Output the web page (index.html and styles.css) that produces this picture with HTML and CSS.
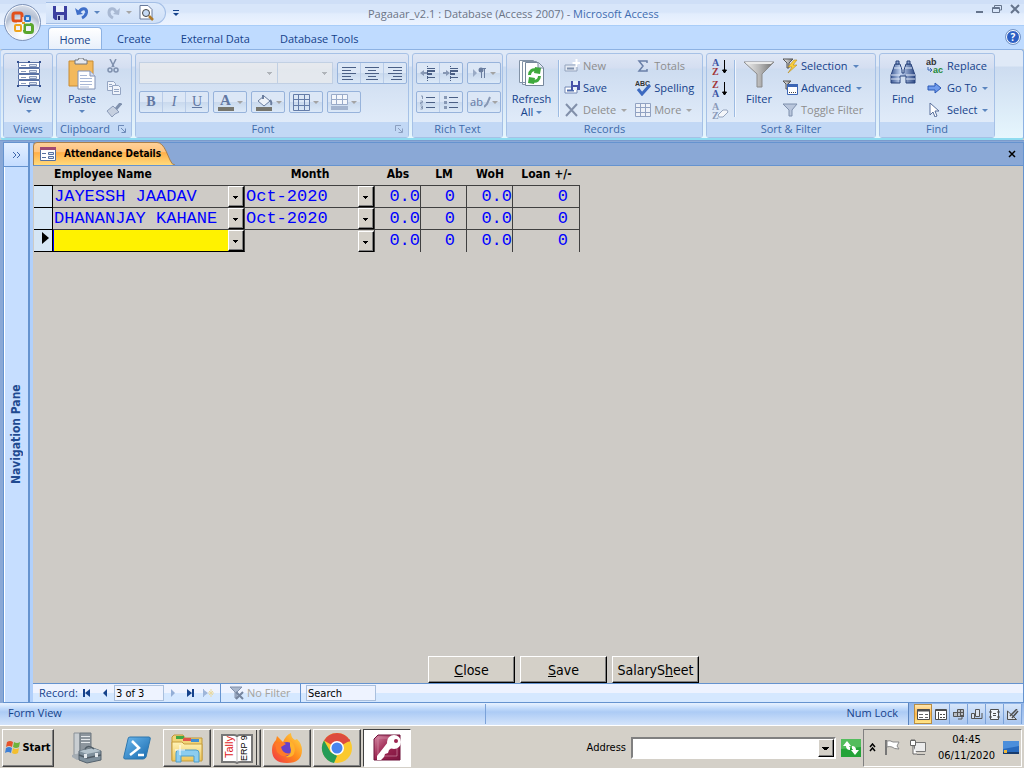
FILE: index.html
```
<!DOCTYPE html>
<html lang="en">
<head>
<meta charset="utf-8">
<title>Pagaaar_v2.1 : Database (Access 2007) - Microsoft Access</title>
<link rel="stylesheet" href="styles.css">
</head>
<body>
<svg class="defs" width="0" height="0" aria-hidden="true">
  <defs>
    <linearGradient id="steel" x1="0" x2="1"><stop offset="0" stop-color="#f4f4f4"/><stop offset=".5" stop-color="#b9b9b9"/><stop offset="1" stop-color="#6f6f6f"/></linearGradient>
    <linearGradient id="blue" x1="0" x2="1"><stop offset="0" stop-color="#3d5a94"/><stop offset=".4" stop-color="#c3d5f2"/><stop offset="1" stop-color="#2c4884"/></linearGradient>
    <linearGradient id="folder" x1="0" y1="0" x2="0" y2="1"><stop offset="0" stop-color="#fff3b8"/><stop offset="1" stop-color="#eec659"/></linearGradient>
    <linearGradient id="ps" x1="0" y1="0" x2="1" y2="1"><stop offset="0" stop-color="#6db9ee"/><stop offset="1" stop-color="#1668ad"/></linearGradient>
    <linearGradient id="fox" x1="1" y1="0" x2="0" y2="1"><stop offset="0" stop-color="#ffe14a"/><stop offset=".5" stop-color="#ff8a1c"/><stop offset="1" stop-color="#f0304a"/></linearGradient>
    <linearGradient id="key" x1="0" y1="0" x2="1" y2="1"><stop offset="0" stop-color="#d58ba5"/><stop offset=".5" stop-color="#9c2450"/><stop offset="1" stop-color="#7c1540"/></linearGradient>
  </defs>
  <symbol id="lines-left" viewBox="0 0 16 14"><path d="M1 1.500h14M1 4.500h9M1 7.500h14M1 10.500h9M1 13.500h11" stroke="#4a5f85" fill="none"/></symbol>
  <symbol id="lines-center" viewBox="0 0 16 14"><path d="M1 1.500h14M4 4.500h8M1 7.500h14M4 10.500h8M2 13.500h12" stroke="#4a5f85" fill="none"/></symbol>
  <symbol id="lines-right" viewBox="0 0 16 14"><path d="M1 1.500h14M6 4.500h9M1 7.500h14M6 10.500h9M4 13.500h11" stroke="#4a5f85" fill="none"/></symbol>
  <symbol id="funnel" viewBox="0 0 16 14"><path d="M1 1h14L10 7v6H7V7z" fill="#b9c6dc" stroke="#7f90ad"/></symbol>
</svg>

<header class="titlebar">
  <button class="orb" aria-label="Office Button">
    <svg width="26" height="26" viewBox="0 0 26 26" fill="none" stroke-width="3">
      <rect x="3" y="3" width="9" height="8" rx="2" stroke="#e2501b"/>
      <rect x="15" y="6" width="5" height="5" rx="1" stroke="#2d78c8" stroke-width="2"/>
      <rect x="5" y="15" width="6" height="6" rx="1" stroke="#f0a51d" stroke-width="2"/>
      <rect x="14.500" y="14.500" width="8" height="8" rx="2" stroke="#5aa62c"/>
      <path d="M13 7v13M7 13h13" stroke="#fff" stroke-width="1"/>
      <path d="M12 13h3" stroke="#e99a1c" stroke-width="2"/>
    </svg>
  </button>
  <div class="quick">
    <button aria-label="Save"><svg width="14" height="14"><path d="M0 0h14v14H2L0 12z" fill="#3b3fa0"/><path d="M3 0h8v6H3z" fill="#e9f0fb"/><path d="M4 9h7v5H4z" fill="#bcc8e8"/><path d="M5 10h2v4H5z" fill="#24276c"/></svg></button>
    <button class="undo" aria-label="Undo"><svg width="14" height="14" fill="none"><path d="M4 6C7 1 12 2 11.500 6.500 11 9 9 11 7 12" stroke="#3f6fc9" stroke-width="3"/><path d="M0 2l2 7 6-1z" fill="#3f6fc9"/></svg><i class="arrow"></i></button>
    <button class="redo" aria-label="Redo" disabled><svg width="14" height="14" fill="none"><path d="M9 6C7 1 2 2 2 6.500 2 9 4 11 6 12" stroke="#a9b9d3" stroke-width="3"/><path d="M13 2l-1 7-6-1z" fill="#a9b9d3"/></svg><i class="arrow"></i></button>
    <button class="preview" aria-label="Print Preview"><svg width="15" height="16"><path d="M1 .5h8l4 4V14H1z" fill="#fff" stroke="#687a9b"/><circle cx="7" cy="8" r="3.500" fill="#c5daf5" stroke="#444"/><path d="M10 11l4 4" stroke="#b07a2a" stroke-width="2.500"/></svg></button>
  </div>
  <button class="customize" aria-label="Customize Quick Access Toolbar"><i class="arrow"></i></button>
  <h1 class="caption">Pagaaar_v2.1 : Database (Access 2007) - <b>Microsoft Access</b></h1>
  <div class="winbuttons">
    <button aria-label="Minimize"><svg width="10" height="10"><path d="M2 8h7" stroke="#65748c" stroke-width="2"/></svg></button>
    <button aria-label="Restore"><svg width="10" height="10" fill="none" stroke="#65748c"><path d="M2.500 3V1.500h7V6H8"/><path d="M.5 3.500h7v5h-7zM.5 4.500h7"/></svg></button>
    <button aria-label="Close"><svg width="10" height="10"><path d="M1 1l8 8M9 1L1 9" stroke="#65748c" stroke-width="2"/></svg></button>
  </div>
</header>

<nav class="tabs">
  <button class="tab active">Home</button>
  <button class="tab">Create</button>
  <button class="tab">External Data</button>
  <button class="tab">Database Tools</button>
  <button class="help" aria-label="Help">?</button>
</nav>

<section class="ribbon">
  <div class="group views">
    <div class="tools">
      <button class="big"><svg width="26" height="28" viewBox="0 0 26 28"><path d="M2 2h22v24H2z" fill="#fff"/><path d="M2.500 2.500h21v5h-21zM2.500 8.500h21v5h-21zM2.500 14.500h21v5h-21zM2.500 20.500h21v5h-21z" fill="#fff" stroke="#5871a5"/><path d="M5 5.500h5M5 11.500h5M5 17.500h5M5 23.500h5" stroke="#8a9abb"/><path d="M13.500 4.500h7v2h-7zM13.500 10.500h7v2h-7zM13.500 16.500h7v2h-7zM13.500 22.500h7v2h-7z" fill="#dde6f5" stroke="#8a9abb"/><path d="M1 1h2v2H1zM23 1h2v2h-2zM1 25h2v2H1zM23 25h2v2h-2zM12 1h2v2h-2zM12 25h2v2h-2z" fill="#34508f"/></svg>View<i class="arrow"></i></button>
    </div>
    <h2>Views</h2>
  </div>

  <div class="group clipboard">
    <div class="tools">
      <button class="big"><svg width="28" height="32" viewBox="0 0 28 32"><path d="M1 3h24v25H1z" fill="#f3b95c" stroke="#c88c35"/><path d="M7 2h3l1-2h4l1 2h3v4H7z" fill="#e5e8ee" stroke="#72767d"/><path d="M10 13h12l5 5v13H10z" fill="#fff" stroke="#8292b5"/><path d="M22 13v5h5" fill="#d6def0" stroke="#8292b5"/><path d="M12 17.500h7M12 20.500h12M12 23.500h12M12 26.500h12M12 29h9" stroke="#a9b8d6"/></svg>Paste<i class="arrow"></i></button>
      <div class="mini">
        <button aria-label="Cut" disabled><svg width="14" height="14" fill="none" stroke="#7f90ad"><path d="M4 0l4 8M10 0L6 8" stroke-width="1.500"/><circle cx="4" cy="11" r="2" stroke-width="1.500"/><circle cx="10" cy="11" r="2" stroke-width="1.500"/></svg></button>
        <button aria-label="Copy" disabled><svg width="16" height="14" fill="#f0f4fb" stroke="#94a5c2"><path d="M1.500.5h6l2 2v7h-8z"/><path d="M6.500 4.500h6l2 2v7h-8z"/><path d="M3 3.500h3M3 5.500h3M8 8.500h5M8 10.500h5"/></svg></button>
        <button aria-label="Format Painter" disabled><svg width="16" height="14"><path d="M15 0l-5 6" stroke="#7f90ad" stroke-width="3"/><path d="M7 3l6 6-4 2-3 3-5-6z" fill="#c6d0e0" stroke="#8b9bb8"/></svg></button>
      </div>
    </div>
    <h2>Clipboard <button class="launch" aria-label="Clipboard options"><svg width="8" height="8" fill="none" stroke="#6d8ab8"><path d="M.5 6V.5H6M3 3l4 4M7.500 3.500v4h-4"/></svg></button></h2>
  </div>

  <div class="group font">
    <div class="tools rows">
      <div class="row">
        <div class="combos">
          <select class="face" aria-label="Font" disabled><option></option></select><select class="size" aria-label="Font size" disabled><option></option></select>
        </div>
        <div class="seg">
          <button aria-label="Align left"><svg width="16" height="14"><use href="#lines-left"/></svg></button>
          <button aria-label="Center"><svg width="16" height="14"><use href="#lines-center"/></svg></button>
          <button aria-label="Align right"><svg width="16" height="14"><use href="#lines-right"/></svg></button>
        </div>
      </div>
      <div class="row">
        <div class="seg letters"><button><b>B</b></button><button><i>I</i></button><button><u>U</u></button></div>
        <div class="seg"><button class="drop color" aria-label="Font color"><span>A</span><i class="arrow"></i></button></div>
        <div class="seg"><button class="drop" aria-label="Fill color"><svg width="18" height="17"><path d="M3 7l6-5 6 5-6 5z" fill="#eef2f8" stroke="#6b7e9f"/><path d="M8 5V1M15 6q2 2 1 5" stroke="#6b7e9f" stroke-width="2" fill="none"/><path d="M1 13h16v4H1z" fill="#77766e"/></svg><i class="arrow"></i></button></div>
        <div class="seg"><button class="drop" aria-label="Gridlines"><svg width="17" height="17" fill="none" stroke="#647ca8"><path d="M.5.5h16v16H.5zM5.500 0v17M11.500 0v17M0 5.500h17M0 11.500h17"/></svg><i class="arrow"></i></button></div>
        <div class="seg"><button class="drop wide" aria-label="Alternate row color"><svg width="17" height="17"><path d="M.5.500h16v10H.5zM5.500 0v11M11.500 0v11M0 5.500h17" fill="#f4f7fc" stroke="#9aabc9"/><path d="M0 12h17v4H0z" fill="#a3b4cf"/></svg><i class="arrow"></i></button></div>
      </div>
    </div>
    <h2>Font <button class="launch" aria-label="Font options"><svg width="8" height="8" fill="none" stroke="#8b9fc0"><path d="M.5 6V.5H6M3 3l4 4M7.500 3.500v4h-4"/></svg></button></h2>
  </div>

  <div class="group rich">
    <div class="tools rows">
      <div class="row">
        <div class="seg">
          <button aria-label="Decrease indent"><svg width="16" height="15"><path d="M7 2.500h8M7 11.500h8" stroke="#4a5f85"/><path d="M7 5h8M7 8h5" stroke="#4a5f85" stroke-width="2"/><path d="M7.500 0v15" stroke="#4a5f85" stroke-dasharray="1 1"/><path d="M0 7l4-3v2h3v2H4v2z" fill="#8798b4"/></svg></button>
          <button aria-label="Increase indent"><svg width="16" height="15"><path d="M7 2.500h8M7 11.500h8" stroke="#4a5f85"/><path d="M7 5h8M7 8h5" stroke="#4a5f85" stroke-width="2"/><path d="M7.500 0v15" stroke="#4a5f85" stroke-dasharray="1 1"/><path d="M7 7L3 4v2H0v2h3v2z" fill="#8798b4"/></svg></button>
        </div>
        <div class="seg"><button class="drop" aria-label="Text direction"><svg width="15" height="12"><path d="M1 2l4 4-4 4z" fill="#9aabc6"/><path d="M9.500 1v10M12.500 1v10M14 1.500H9" stroke="#6a7d9f"/><circle cx="9" cy="3" r="2.500" fill="#6a7d9f"/></svg><i class="arrow"></i></button></div>
      </div>
      <div class="row">
        <div class="seg">
          <button aria-label="Numbering"><svg width="16" height="15"><path d="M6 2.500h9M6 7.500h9M6 12.500h9" stroke="#4a5f85"/><path d="M1 1h1.500v3M.5 6h2v1.500h-2V9h2M.5 11h2v3h-2M1 12.500h1.500" fill="none" stroke="#8798b4"/></svg></button>
          <button aria-label="Bullets"><svg width="16" height="15"><path d="M6 2.500h9M6 7.500h9M6 12.500h9" stroke="#4a5f85"/><path d="M1 1h3v3H1zM1 6h3v3H1zM1 11h3v3H1z" fill="#8798b4"/></svg></button>
        </div>
        <div class="seg"><button class="drop highlight" aria-label="Highlight color"><span>ab</span><svg width="7" height="12"><path d="M6 1L3 8l-3 3" stroke="#8798b4" stroke-width="2" fill="none"/></svg><i class="arrow"></i></button></div>
      </div>
    </div>
    <h2>Rich Text</h2>
  </div>

  <div class="group records">
    <div class="tools">
      <button class="big two"><svg width="28" height="32" viewBox="0 0 28 32"><path d="M1.500 2.500h14v22h-14zM4.500 3.500h14v23h-14z" fill="#fff" stroke="#8292a6"/><path d="M7.500 4.500h13l5 5v18h-18z" fill="#fff" stroke="#76879c"/><path d="M20 5v5h5" fill="#dbe5f0" stroke="#76879c"/><path d="M11.500 17Q12 11 18 12M21.500 18Q21 24 15 23" fill="none" stroke="#3faa3d" stroke-width="3"/><path d="M17 9l6 1-1 6-6-1zM16 26l-6-1 1-6 6 1z" fill="#3faa3d"/></svg>Refresh<span>All<i class="arrow"></i></span></button>
      <div class="split"></div>
      <div class="list">
        <button disabled><svg width="16" height="14"><path d="M1 6h12v6H1z" fill="#e3e9f3" stroke="#93a3bd"/><path d="M3 9.500h7" stroke="#7f90ad" stroke-width="2"/><path d="M12.500 0v8M8.500 4h8" stroke="#fff" stroke-width="2"/></svg>New</button>
        <button><svg width="16" height="14"><path d="M1 6h12v6H1z" fill="#fff" stroke="#7288b5"/><path d="M3 9.500h7" stroke="#4e6cad" stroke-width="2"/><path d="M7 0h9v9H7z" fill="#4750a8"/><path d="M9 0h5v4H9zM9 6h4v3H9z" fill="#e8eefa"/></svg>Save</button>
        <button disabled><svg width="16" height="14"><path d="M2 1l11 12M13 1L2 13" stroke="#8290aa" stroke-width="2"/></svg>Delete<i class="arrow"></i></button>
      </div>
      <div class="list second">
        <button disabled><svg width="16" height="14"><path d="M12 4V2H4l4 5-4 5h8v-2" fill="none" stroke="#6a7fa8" stroke-width="1.500"/></svg>Totals</button>
        <button class="abc"><svg width="16" height="16"><text x="0" y="6">ABC</text><path d="M3 9l4 5 8-9" fill="none" stroke="#3d6ac0" stroke-width="3"/></svg>Spelling</button>
        <button disabled><svg width="16" height="14"><path d="M.5.5h15v13H.5zM.5 4.500h15M.5 9.500h15M5.500 0v14M10.500 0v14" fill="#edf1f8" stroke="#91a2c2"/></svg>More<i class="arrow"></i></button>
      </div>
    </div>
    <h2>Records</h2>
  </div>

  <div class="group sort">
    <div class="tools">
      <div class="az">
        <button aria-label="Ascending"><svg width="18" height="18"><text x="0" y="8" fill="#3d56a5">A</text><text x="0" y="17" fill="#a13439">Z</text><path d="M12.500 2v13M10.500 12l2 3 2-3z" stroke="#000" fill="#000"/></svg></button>
        <button aria-label="Descending"><svg width="18" height="18"><text x="0" y="8" fill="#a13439">Z</text><text x="0" y="17" fill="#3d56a5">A</text><path d="M12.500 2v13M10.500 12l2 3 2-3z" stroke="#000" fill="#000"/></svg></button>
        <button aria-label="Clear all sorts" disabled><svg width="18" height="18"><text x="0" y="8" fill="#8b9ab8">A</text><text x="0" y="17" fill="#8b9ab8">Z</text><path d="M6 13l5-5h4l1 2-5 5H7z" fill="#f4f6fa" stroke="#95a4bd"/></svg></button>
      </div>
      <div class="split"></div>
      <button class="big"><svg width="32" height="32" viewBox="0 0 32 32"><path d="M1 4h30L19 16v13h-5V16z" fill="url(#steel)" stroke="#8b8b8b"/><path d="M2 4h28l-2 2H4z" fill="#e9e9e9"/></svg>Filter</button>
      <div class="list">
        <button><svg width="16" height="16"><path d="M1 1h10L7 5v5H5V5z" fill="url(#steel)" stroke="#555"/><path d="M12 2L6 9h4l-4 6 9-8h-4l4-5z" fill="#f9ce3c" stroke="#b68a20" stroke-width=".6"/></svg>Selection<i class="arrow"></i></button>
        <button><svg width="16" height="16"><path d="M1 1h8L6 4v5H4V4z" fill="url(#steel)" stroke="#555"/><path d="M5.500 4.500h10v10h-10z" fill="#fff" stroke="#3c66b5"/><path d="M5 4h11v3H5z" fill="#3c66b5"/><path d="M7 12.500h7" stroke="#444" stroke-dasharray="1 1"/></svg>Advanced<i class="arrow"></i></button>
        <button disabled><svg width="16" height="14"><use href="#funnel"/></svg>Toggle Filter</button>
      </div>
    </div>
    <h2>Sort &amp; Filter</h2>
  </div>

  <div class="group find">
    <div class="tools">
      <button class="big"><svg width="30" height="32" viewBox="0 0 30 32"><path d="M7 6h5l2 6v3h2v-3l2-6h5l4 11v8h-9v-7h-6v7H3v-8z" fill="url(#blue)" stroke="#29427a"/><path d="M3 17h9M18 17h9M3 21h9M18 21h9M6 10h7M17 10h7" stroke="#e0e9f8"/><path d="M8 3h3v3H8zM19 3h3v3h-3z" fill="#8ea5cf" stroke="#29427a"/></svg>Find</button>
      <div class="list">
        <button class="repl"><svg width="18" height="18"><text x="0" y="8" fill="#333">ab</text><text x="7" y="16" fill="#238a36">ac</text><path d="M2 10v3h4M4 11l2 2-2 2" fill="none" stroke="#3c66b5"/></svg>Replace</button>
        <button><svg width="18" height="14"><path d="M2 5h7V2l6 5-6 5V9H2z" fill="#6f9bec" stroke="#2b58b5"/></svg>Go To<i class="arrow"></i></button>
        <button><svg width="18" height="14"><path d="M4 0v12l3-3 2 5 2-1-2-5h4z" fill="#fff" stroke="#596f9b"/></svg>Select<i class="arrow"></i></button>
      </div>
    </div>
    <h2>Find</h2>
  </div>
</section>

<main class="workspace">
  <aside class="navpane">
    <button class="expand" aria-label="Expand navigation pane"><svg width="9" height="8" fill="none" stroke="#3f66aa"><path d="M1 1l3 3-3 3M5 1l3 3-3 3"/></svg></button>
    <h2>Navigation Pane</h2>
  </aside>
  <section class="document">
    <div class="doctabs">
      <div class="doctab">
        <svg class="tabshape" width="142" height="23" preserveAspectRatio="none" viewBox="0 0 142 23"><defs><linearGradient id="orange" x1="0" y1="0" x2="0" y2="1"><stop offset="0" stop-color="#ffd29a"/><stop offset=".42" stop-color="#ffc37c"/><stop offset=".45" stop-color="#ffaf49"/><stop offset="1" stop-color="#ffda7c"/></linearGradient></defs><path d="M.5 23V4Q.5.500 4 .5H124Q129 .5 133 9L137 18Q139 23 142 23" fill="url(#orange)" stroke="#a97f4b"/></svg>
        <svg class="formicon" width="16" height="14"><path d="M.5.500h15v13H.5z" fill="#fff" stroke="#57709f"/><path d="M0 0h16v3H0z" fill="#a14a72"/><path d="M2 6.500h4M2 10.500h4" stroke="#57709f"/><path d="M8.500 5.500h5v2h-5zM8.500 9.500h5v2h-5z" fill="#dfe7f4" stroke="#57709f"/></svg>
        <span>Attendance Details</span>
      </div>
      <button class="closedoc" aria-label="Close form"><svg width="8" height="8"><path d="M1 1l6 6M7 1L1 7" stroke="#000" stroke-width="1.500"/></svg></button>
    </div>
    <div class="form">
      <table class="sheet">
        <colgroup><col class="c-sel"><col class="c-name"><col class="c-month"><col class="c-num"><col class="c-num"><col class="c-num"><col class="c-loan"></colgroup>
        <thead><tr><th></th><th class="left">Employee Name</th><th>Month</th><th>Abs</th><th>LM</th><th>WoH</th><th>Loan +/-</th></tr></thead>
        <tbody>
          <tr><td class="sel"></td>
            <td><div class="combo"><select aria-label="Employee Name"><option>JAYESSH JAADAV</option></select><i></i></div></td>
            <td><div class="combo"><select aria-label="Month"><option>Oct-2020</option></select><i></i></div></td>
            <td><input aria-label="Abs" value="0.0"></td><td><input class="inset" aria-label="LM" value="0"></td><td><input aria-label="WoH" value="0.0"></td><td><input class="inset" aria-label="Loan" value="0"></td></tr>
          <tr><td class="sel"></td>
            <td><div class="combo"><select aria-label="Employee Name"><option>DHANANJAY KAHANE</option></select><i></i></div></td>
            <td><div class="combo"><select aria-label="Month"><option>Oct-2020</option></select><i></i></div></td>
            <td><input aria-label="Abs" value="0.0"></td><td><input class="inset" aria-label="LM" value="0"></td><td><input aria-label="WoH" value="0.0"></td><td><input class="inset" aria-label="Loan" value="0"></td></tr>
          <tr class="current"><td class="sel"><svg width="7" height="12"><path d="M0 0l7 6-7 6z"/></svg></td>
            <td class="editing"><div class="combo"><select aria-label="Employee Name"><option></option></select><i></i></div></td>
            <td><div class="combo"><select aria-label="Month"><option></option></select><i></i></div></td>
            <td><input aria-label="Abs" value="0.0"></td><td><input class="inset" aria-label="LM" value="0"></td><td><input aria-label="WoH" value="0.0"></td><td><input class="inset" aria-label="Loan" value="0"></td></tr>
        </tbody>
      </table>
      <div class="actions">
        <button><u>C</u>lose</button><button><u>S</u>ave</button><button>SalaryS<u>h</u>eet</button>
      </div>
    </div>
    <div class="recordbar">
      <label for="rec">Record:</label>
      <button aria-label="First record"><svg width="8" height="8" fill="#15428b"><path d="M0 0h2v8H0zM7 0v8L2 4z"/></svg></button>
      <button aria-label="Previous record"><svg width="8" height="8" fill="#15428b"><path d="M6 0v8L2 4z"/></svg></button>
      <input id="rec" value="3 of 3">
      <button aria-label="Next record" disabled><svg width="8" height="8" fill="#93aed6"><path d="M2 0v8l4-4z"/></svg></button>
      <button aria-label="Last record"><svg width="8" height="8" fill="#15428b"><path d="M5 0h2v8H5zM0 0v8l5-4z"/></svg></button>
      <button aria-label="New record" disabled><svg width="11" height="8"><path d="M0 0h1v8H0zM1 1v6l4-3z" fill="#9fb6da"/><path d="M8 0v8M5 4h6M6 2l4 4M10 2L6 6" stroke="#e8d9a2"/></svg></button>
      <span class="nofilter"><svg width="15" height="14"><path d="M1 1h12L8 6v6H6V6z" fill="#a9b7cd" stroke="#8392ac"/><path d="M7 6l7 7M14 6l-7 7" stroke="#75859f" stroke-width="2"/></svg>No Filter</span>
      <input class="search" aria-label="Search" value="Search">
    </div>
  </section>
</main>

<footer class="status">
  <span class="mode">Form View</span>
  <span class="lock">Num Lock</span>
  <div class="viewbtns">
    <button class="on" aria-label="Form View"><svg width="13" height="11"><path d="M.5.500h12v10H.5z" fill="#fff" stroke="#4d4d4d"/><path d="M0 1.500h13" stroke="#4d4d4d" stroke-width="2"/><path d="M2 5.500h4M2 8.500h4M8 5.500h3M8 8.500h3" stroke="#666"/></svg></button>
    <button aria-label="Datasheet View"><svg width="12" height="11"><path d="M.5.500h11v10H.5z" fill="#fff" stroke="#4d4d4d"/><path d="M0 1.500h12M3.500 3v8M5 5.500h2M8 5.500h2M5 8.500h2M8 8.500h2" stroke="#4d4d4d"/></svg></button>
    <button aria-label="PivotTable View"><svg width="12" height="11" fill="#b9bec6" stroke="#555"><path d="M4.500.5h6v7h-10v-4h4zM0 3.500h11M4.500 3v5M7.500 0v8"/><path d="M5 10h4V7M7 8l2-2 2 2" fill="none"/></svg></button>
    <button aria-label="PivotChart View"><svg width="12" height="11" fill="#dce3ee" stroke="#555"><path d="M.5 4.500h3v5h-3zM4.500.500h4v7h-4z"/><path d="M3 9.500h8V4" fill="none"/></svg></button>
    <button aria-label="Layout View"><svg width="11" height="11" fill="#f2f5fa" stroke="#4d4d4d"><path d="M1.500.500h8v10h-8zM0 3h3M8 3h3M0 8h3M8 8h3M4 4.500h3M4 6.500h3"/></svg></button>
    <button aria-label="Design View"><svg width="12" height="11" fill="#dce3ee" stroke="#4d4d4d"><path d="M.5 2v8.500h9z"/><path d="M3 7L10 0M5 9l6-7" stroke-width="1.500"/></svg></button>
  </div>
</footer>

<footer class="taskbar">
  <button class="start"><svg width="16" height="15"><path d="M2 2q3-2 6 0L7 7Q4 5 1 7z" fill="#e6532b"/><path d="M9 2q3 2 6 0l-1 5q-3 2-6 0z" fill="#6fb43a"/><path d="M1 8q3-2 6 0l-1 5q-3-2-6 0z" fill="#3d7fd6"/><path d="M8 8q3 2 6 0l-1 5q-3 2-6 0z" fill="#f4bf2f"/></svg>Start</button>
  <div class="apps">
    <button aria-label="Server Manager"><svg width="32" height="32"><path d="M3 1h6v22H3z" fill="#c9ced2" stroke="#8a9198"/><path d="M9 1h11v22H9z" fill="#8d969e" stroke="#6d767e"/><path d="M10 4.500h9M10 7.500h9M10 10.500h9" stroke="#e4e8eb"/><path d="M1 23l8-2 2 6-5 1-5-3z" fill="#a5adb4"/><path d="M8 19l14-3 8 3v9l-14 3-8-3z" fill="#7f909c" stroke="#56636e"/><path d="M8 19l8 3 14-3-8-3z" fill="#b4c3cc"/><path d="M8 23l8 3 14-3M14 17q3-5 9 0" fill="none" stroke="#4f5b65" stroke-width="1.500"/><path d="M13 22h3v4h-3zM24 21h3v4h-3z" fill="#e5eaee"/></svg></button>
    <button aria-label="PowerShell"><svg width="28" height="24"><path d="M7 1h19q2 0 1 3l-4 17q-1 2-3 2H2q-2 0-1-3L5 3q0-2 2-2z" fill="url(#ps)" stroke="#2f77ad"/><path d="M9 5l7 7-9 7M15 19h6" fill="none" stroke="#fff" stroke-width="2.500"/></svg></button>
    <button class="raised" aria-label="File Explorer"><svg width="32" height="30"><path d="M1 4l2-2h9l2 3h17v22H1z" fill="#f1d478" stroke="#bf9738"/><path d="M5 3h8v3H5z" fill="#3fa845"/><path d="M12 5h8v3h-8z" fill="#e0544a"/><path d="M20 6h8v3h-8z" fill="#418fd3"/><path d="M1 9h10l2 2h18v17H1z" fill="url(#folder)" stroke="#c69d3c"/><path d="M5 20q0-3 3-3h17q3 0 3 3v9h-5v-6H10v6H5z" fill="#8ccdf0" stroke="#4c9dcb"/><path d="M9 12v10M4 17h10" stroke="#fff"/></svg></button>
    <button class="raised stack" aria-label="Tally ERP 9"><svg width="34" height="32"><path d="M2 3h12q3 0 3 2 0-2 3-2h12v27H20q-2 0-3 1-1-1-3-1H2z" fill="#fff" stroke="#777" stroke-width="2"/><path d="M17 5v25" stroke="#bbb"/><text class="tally" transform="translate(13 26) rotate(-90)">Tally</text><text class="erp" transform="translate(27 29) rotate(-90)">ERP 9</text></svg></button>
    <button class="raised" aria-label="Firefox"><svg width="32" height="32"><path d="M8 6l4 4q3-7 8-9 0 5 4 7l2-1q5 5 5 11 0 13-15 13T1 18Q1 12 5 8l1-4z" fill="url(#fox)"/><circle cx="16" cy="17" r="7" fill="#6741c7"/><path d="M4 12q6-4 11 0l-5 3q2 8 10 6-7 7-14-1z" fill="#ff7a2a"/><path d="M19 9q7 4 4 13-3 4-8 3 7-3 4-11z" fill="#ffb32c"/></svg></button>
    <button class="raised" aria-label="Chrome"><svg width="32" height="32"><circle cx="16" cy="16" r="15" fill="#fbc92d"/><path d="M16 16L3 8.500A15 15 0 0 1 29 8.500z" fill="#dd4b3e"/><path d="M16 8.500h13" stroke="#dd4b3e" stroke-width="2"/><path d="M3 8.500L9.500 20 16 24l-3 7A15 15 0 0 1 3 8.500z" fill="#259c57"/><circle cx="16" cy="16" r="7" fill="#fff"/><circle cx="16" cy="16" r="5.500" fill="#4784ed"/></svg></button>
    <button class="pressed" aria-label="Microsoft Access"><svg width="30" height="30"><path d="M6 2h22v25H2V6z" fill="url(#key)" stroke="#6d1139"/><path d="M6 5h19v18H6z" fill="none" stroke="#d596ae" opacity=".6"/><circle cx="22" cy="9" r="7" fill="#fff"/><circle cx="24" cy="8" r="2" fill="#9c2450"/><path d="M21 14l-4 3-1 3-3 1-1 3-3 3H5v-4L16 9z" fill="#fff"/></svg></button>
  </div>
  <label class="address">Address <span class="field"><select aria-label="Address"><option></option></select><i></i></span></label>
  <button class="go" aria-label="Go"><svg width="20" height="18"><path d="M0 0h20v18H0z" fill="#24a338"/><path d="M0 0h20v8L0 10z" fill="#53bd5d"/><path d="M6 2L2 7h3q0 4 4 4V8Q8 8 8 7h2zM14 16l4-5h-3q0-4-4-4v3q1 0 1 1h-2z" fill="#fff"/></svg></button>
  <div class="tray">
    <button aria-label="Show hidden icons"><svg width="7" height="9" fill="none" stroke="#000" stroke-width="1.500"><path d="M1 4l2.500-3L6 4M1 8l2.500-3L6 8"/></svg></button>
    <svg width="17" height="17"><path d="M2 1v15" stroke="#777" stroke-width="2"/><path d="M3 2q3-1 6 1h6l-2 4 2 3q-5 0-7-2-3-1-5 0z" fill="#fff" stroke="#888"/></svg>
    <svg width="17" height="17"><path d="M5.500 3.500h11v9h-11zM8 15.500h8" fill="#ececec" stroke="#777"/><path d="M1.500 1.500h5v5h-5zM3 0v2M5 0v2M4 7v8h4" fill="#fff" stroke="#666"/></svg>
    <time>04:45<br>06/11/2020</time>
    <svg width="16" height="13"><path d="M0 0h16v13H0z" fill="#2769bd"/><path d="M0 0h16v5L0 8z" fill="#4b8edb"/><path d="M0 11h16v2H0z" fill="#173b6d"/><path d="M1 9h3v3H1z" fill="#f0b93a"/></svg>
  </div>
</footer>
</body>
</html>
```
FILE: styles.css
```
* { box-sizing: border-box; }
html, body { height: 100%; }
body {
  margin: 0;
  display: flex;
  flex-direction: column;
  overflow: hidden;
  background: #d4d0c8;
  color: #15428b;
  font: 12px/16px "Open Sans", "Noto Sans", sans-serif;
}
button {
  margin: 0;
  padding: 0;
  border: 0;
  background: none;
  color: inherit;
  font: inherit;
  white-space: nowrap;
}
h1, h2 { margin: 0; font: inherit; }
svg { display: block; flex: none; }
.defs { position: absolute; }
input, select { font: inherit; color: inherit; border-radius: 0; margin: 0; }
select { appearance: none; }
.arrow {
  flex: none;
  width: 0;
  border: 3px solid transparent;
  border-top-color: #5b85bf;
  border-bottom: 0;
}
button:disabled { color: #8d8d8d; }
button:disabled .arrow { border-top-color: #a6a6a6; }

/* Title bar */
.titlebar {
  position: relative;
  z-index: 2;
  flex: none;
  display: flex;
  align-items: center;
  height: 26px;
  padding-left: 46px;
  background: linear-gradient(#cfdff7 0 4px, #d8e6fa 4px 12px, #e2edfd 14px, #ecf3ff);
  border-bottom: 1px solid #a9cdf8;
}
.orb {
  position: absolute;
  left: 4px;
  top: 4px;
  width: 37px;
  height: 37px;
  display: grid;
  place-items: center;
  border: 1px solid #7e93b8;
  border-radius: 50%;
  background: radial-gradient(circle at 50% 85%, #fff, #dfe5ef 45%, #b4bfd2 60%, #eef2f8);
  box-shadow: inset 0 0 0 1px #f4f7fc;
}
.quick {
  display: flex;
  align-items: center;
  height: 22px;
  width: 120px;
  padding-left: 7px;
  border: 1px solid #a4bfe6;
  border-left: 0;
  border-radius: 0 11px 11px 0;
  background: linear-gradient(#dfebfb, #cfe0f8);
}
.quick button { display: flex; align-items: center; gap: 5px; width: 22px; }
.quick .undo, .quick .redo { width: 32px; }
.customize { padding: 4px 7px; }
.customize .arrow { display: block; border-top-color: #15428b; }
.customize::before { content: ""; display: block; width: 6px; height: 1px; margin-bottom: 2px; background: #15428b; }
.caption { flex: 1; padding: 3px 0 0 182px; font-size: 11px; color: #6b7486; white-space: nowrap; }
.caption b { font-weight: 400; color: #3f6cb0; }
.winbuttons { display: flex; align-self: flex-start; gap: 8px; padding: 4px 4px 0 0; }

/* Tab strip */
.tabs {
  flex: none;
  display: flex;
  align-items: stretch;
  height: 23px;
  padding-left: 48px;
  background: #bfdbff;
}
.tab { padding: 3px 15px 0; font-size: 11px; }
.tab.active {
  width: 54px;
  padding: 2px 0 0;
  border: 1px solid #8db2e3;
  border-bottom: 0;
  border-radius: 4px 4px 0 0;
  background: linear-gradient(#fff, #e8f0fb);
  margin-top: 1px;
}
.help {
  width: 14px;
  height: 14px;
  margin: 4px 4px 0 auto;
  border: 1px solid #fff;
  border-radius: 50%;
  outline: 1px solid #7493c4;
  background: #2c5fc4;
  color: #fff;
  font-weight: 700;
  font-size: 10px;
  line-height: 12px;
}

/* Ribbon */
.ribbon {
  flex: none;
  display: flex;
  gap: 3px;
  height: 91px;
  padding: 3px 2px 0;
  border: 1px solid #8db2e3;
  border-left-color: #b9d5f8;
  border-bottom: 2px solid #8fdcf0;
  border-radius: 3px;
  background: linear-gradient(#dfe9f7 0 16px, #cddcf0 17px, #e6f6fd);
  font-size: 11px;
}
.group {
  display: flex;
  flex-direction: column;
  border: 1px solid #a6c1e6;
  border-radius: 3px;
  background: linear-gradient(#dfe7f5 0, #d4def1 14px, #cddcf0 15px, #e0ebf9 68px);
}
.group > h2 {
  position: relative;
  height: 15px;
  flex: none;
  line-height: 14px;
  background: #c2d8f5;
  color: #3e6aaa;
  text-align: center;
}
.clipboard > h2, .font > h2 { padding-right: 18px; }
.launch { position: absolute; right: 5px; top: 3px; }
.tools { flex: 1; display: flex; padding: 1px 2px 0; min-height: 0; }
.views { width: 50px; }
.clipboard { width: 76px; }
.font { width: 274px; }
.rich { width: 91px; }
.records { width: 197px; }
.sort { width: 170px; }
.find { width: 116px; }
.big {
  flex: none;
  width: 46px;
  display: flex;
  flex-direction: column;
  align-items: center;
  line-height: 14px;
}
.big svg { height: 32px; margin: 3px 0 2px; }
.big > .arrow { margin-top: 4px; }
.big span { display: flex; align-items: center; gap: 3px; height: 12px; }
.mini { display: flex; flex-direction: column; gap: 8px; padding: 4px 0 0 1px; }
.mini button { height: 14px; }
.split { width: 1px; margin: 5px 3px 5px 4px; background: #9dbbe2; box-shadow: 1px 0 #f1f6fd; }
.list { display: flex; flex-direction: column; padding-left: 2px; }
.list button { display: flex; align-items: center; gap: 3px; height: 22px; }
.list button .arrow { margin-left: 2px; }
.second { margin-left: 6px; }
.records .big { width: 45px; }
.abc text { font: 700 7px "Liberation Sans", sans-serif; fill: #333; }
.repl text { font: 700 9px/9px "Liberation Sans", sans-serif; }
.az { display: flex; flex-direction: column; padding-left: 3px; }
.az button { height: 22px; padding-top: 2px; }
.az text { font: 700 10px "Liberation Serif", serif; }
.sort .big { width: 42px; }
.find .big { width: 42px; }

.tools.rows { flex-direction: column; gap: 7px; padding: 8px 3px 0; }
.row { display: flex; gap: 4px; height: 22px; }
.combos { display: flex; }
.combos select {
  height: 22px;
  border: 1px solid #b9c9de;
  background: linear-gradient(#a3a3a3, #a3a3a3) no-repeat right 5px top 9px / 5px 1px, linear-gradient(#a3a3a3, #a3a3a3) no-repeat right 6px top 10px / 3px 1px, linear-gradient(#a3a3a3, #a3a3a3) no-repeat right 7px top 11px / 1px 1px, #ededed;
}
.combos .face { width: 139px; }
.combos .size { width: 55px; border-left: 0; }
.seg { display: flex; border: 1px solid #97b3db; border-radius: 2px; background: linear-gradient(#dce7f6 50%, #c9d9ed 50%, #dce9f8); }
.seg button { display: grid; place-items: center; width: 22px; color: #6177a2; }
.seg button + button { border-left: 1px solid #b9cce8; width: 23px; }
.seg .drop { display: flex; align-items: center; justify-content: center; gap: 3px; width: 32px; }
.seg .drop .arrow { border-top-color: #a3a3a3; }
.letters button { font: 14px "Liberation Serif", serif; }
.color span { width: 16px; border-bottom: 4px solid #77766e; font: 700 15px/14px "Liberation Serif", serif; }
.seg .drop.highlight { gap: 1px; }

/* Work area */
.workspace { flex: 1; display: flex; min-height: 0; background: #8aa8d6; border-top: 1px solid #7b9bcc; padding-top: 1px; }
.navpane {
  flex: none;
  width: 26px;
  margin-left: 3px;
  display: flex;
  flex-direction: column;
  border: 1px solid #6593cf;
  background: #c6deff;
  box-shadow: inset 1px 1px #fff;
}
.expand { height: 24px; display: grid; place-items: center; border-bottom: 1px solid #6593cf; background: linear-gradient(#e3efff, #c4dcff); }
.navpane h2 {
  flex: 1;
  writing-mode: vertical-rl;
  transform: rotate(180deg);
  text-align: center;
  font: 700 12px/24px "DejaVu Sans Condensed", "DejaVu Sans", sans-serif;
  color: #1f4a90;
}
.document { flex: 1; min-width: 0; display: flex; flex-direction: column; border-left: 4px solid #b1d0fb; outline: 1px solid #6593cf; outline-offset: -1px; }
.doctabs { flex: none; display: flex; justify-content: space-between; align-items: center; height: 24px; border-bottom: 1px solid #6593cf; }
.doctab { position: relative; display: flex; align-items: center; gap: 8px; height: 23px; padding: 0 14px 0 7px; color: #000; font: 700 10px/16px "DejaVu Sans Condensed", "DejaVu Sans", sans-serif; }
.doctab > * { position: relative; }
.doctab .tabshape { position: absolute; left: 0; top: 0; }
.closedoc { padding: 8px; }
.form { flex: 1; display: flex; flex-direction: column; justify-content: space-between; min-height: 0; background: #cecbc6; }

.sheet { table-layout: fixed; width: 546px; border-collapse: separate; border-spacing: 0; color: #00f; margin-left: 1px; }
.c-sel { width: 19px; }
.c-name { width: 192px; }
.c-month { width: 130px; }
.c-num { width: 46px; }
.c-loan { width: 67px; }
.sheet th { height: 19px; padding: 0; color: #000; font: 700 12px/16px "DejaVu Sans Condensed", "DejaVu Sans", sans-serif; vertical-align: top; white-space: nowrap; }
.sheet th.left { text-align: left; padding-left: 1px; }
.sheet td { height: 22px; padding: 0; border-top: 1px solid #404040; border-right: 1px solid #404040; }
.sheet .sel { background: #d6e6f5; border-color: #000; }
.sel svg { margin: 0 0 5px 8px; }
.combo { display: flex; height: 21px; }
.combo select, .sheet input { width: 100%; min-width: 0; height: 21px; padding: 0 0 0 1px; border: 0; outline: 0; background: transparent; font: 17px/21px "Liberation Mono", monospace; }
.sheet input { display: block; height: 20px; padding: 0; line-height: 20px; text-align: right; }
.sheet .inset { padding-right: 11px; }
.combo i, .address i {
  flex: none;
  width: 16px;
  border: 1px solid;
  border-color: #fff #000 #000 #fff;
  box-shadow: inset -1px -1px #808080;
  background: linear-gradient(#000, #000) no-repeat 4px 9px / 5px 1px, linear-gradient(#000, #000) no-repeat 5px 10px / 3px 1px, linear-gradient(#000, #000) no-repeat 6px 11px / 1px 1px, #d4d0c8;
}
.editing select { background: #fff200; border-left: 1px solid #00f; }
.current td:nth-child(-n+2) { border-bottom: 1px solid #000; }
.actions { display: flex; gap: 5px; padding: 0 0 0 395px; }
.actions button {
  width: 87px;
  height: 27px;
  border: 1px solid;
  border-color: #fff #000 #000 #fff;
  box-shadow: inset -1px -1px #808080;
  background: #d4d0c8;
  color: #000;
  font: 14px/22px "DejaVu Sans Condensed", "DejaVu Sans", sans-serif;
}

.recordbar { flex: none; display: flex; align-items: center; height: 20px; padding-left: 6px; border: 1px solid #6593cf; border-left: 0; background: linear-gradient(#eef3ff 50%, #d5e8ff 50%); font-size: 11px; }
.recordbar button { width: 18px; display: grid; place-items: center; }
.recordbar input { height: 16px; width: 50px; border: 1px solid #a9bfdd; background: #eef3ff; color: #000; padding: 0 1px; font: 11px/14px "DejaVu Sans Condensed", "DejaVu Sans", sans-serif; }
.recordbar .search { width: 70px; margin-left: 5px; }
.nofilter { display: flex; align-items: center; align-self: stretch; gap: 3px; width: 81px; margin-left: 2px; padding-left: 8px; border: solid #6593cf; border-width: 0 1px; color: #a5a39c; white-space: nowrap; }

/* Status bar */
.status { flex: none; display: flex; align-items: center; height: 22px; background: linear-gradient(#e3efff 0 1px, #c4dcfb 5px, #accbf5 9px, #d4e4fb); color: #15428b; font-size: 11px; }
.mode { width: 47.5%; padding-left: 8px; height: 20px; line-height: 18px; border-right: 1px solid #7ba2d9; }
.lock { flex: 1; height: 20px; line-height: 18px; text-align: right; padding-right: 10px; }
.viewbtns { display: flex; align-self: stretch; padding: 1px 2px 1px 5px; border-left: 1px solid #5a84bf; background: linear-gradient(#90b4e8, #b5d0f5); }
.viewbtns button { width: 18px; display: grid; place-items: center; border-right: 1px solid #7ba2d9; background: linear-gradient(#d7e6fa, #a9c6f0); }
.viewbtns .on { border: 1px solid #b98d42; background: linear-gradient(#ffe7b0, #ffb84a 50%, #ffe78a); }

/* Windows task bar */
.taskbar { flex: none; display: flex; align-items: center; height: 43px; padding: 2px 2px 1px; background: #d4d0c8; border-top: 1px solid #fff; color: #000; font: 11px/16px "DejaVu Sans Condensed", "DejaVu Sans", sans-serif; }
.start, .raised { border: 1px solid; border-color: #fff #404040 #404040 #fff; box-shadow: inset -1px -1px #808080; }
.start { width: 52px; height: 38px; display: flex; align-items: center; justify-content: center; gap: 1px; font-weight: 700; font-size: 11px; }
.apps { display: flex; gap: 2px; margin-left: 9px; }
.apps button { width: 48px; height: 38px; display: grid; place-items: center; }
.apps .stack { box-shadow: inset -1px -1px #808080, inset -3px 0 #d4d0c8, inset -4px 0 #404040; }
.apps .pressed { border: 1px solid; border-color: #404040 #fff #fff #404040; background: #fff; }
.tally { font: 11px "Liberation Sans", sans-serif; fill: #e01818; }
.erp { font: 9px "Liberation Sans", sans-serif; }
.address { display: flex; align-items: center; gap: 5px; margin-left: auto; }
.field { display: flex; height: 22px; border: 2px solid; border-color: #808080 #fff #fff #808080; background: #fff; }
.field select { width: 185px; border: 0; background: #fff; }
.field i { background-position: 3px 7px, 4px 8px, 5px 9px, 0 0; background-size: 7px 1px, 5px 1px, 3px 1px, auto; }
.go { margin: 0 2px 0 5px; }
.tray { display: flex; align-items: center; gap: 8px; height: 38px; padding: 0 2px 0 5px; border: 1px solid; border-color: #808080 #fff #fff #808080; }
.tray time { text-align: center; margin-left: 4px; }
```
